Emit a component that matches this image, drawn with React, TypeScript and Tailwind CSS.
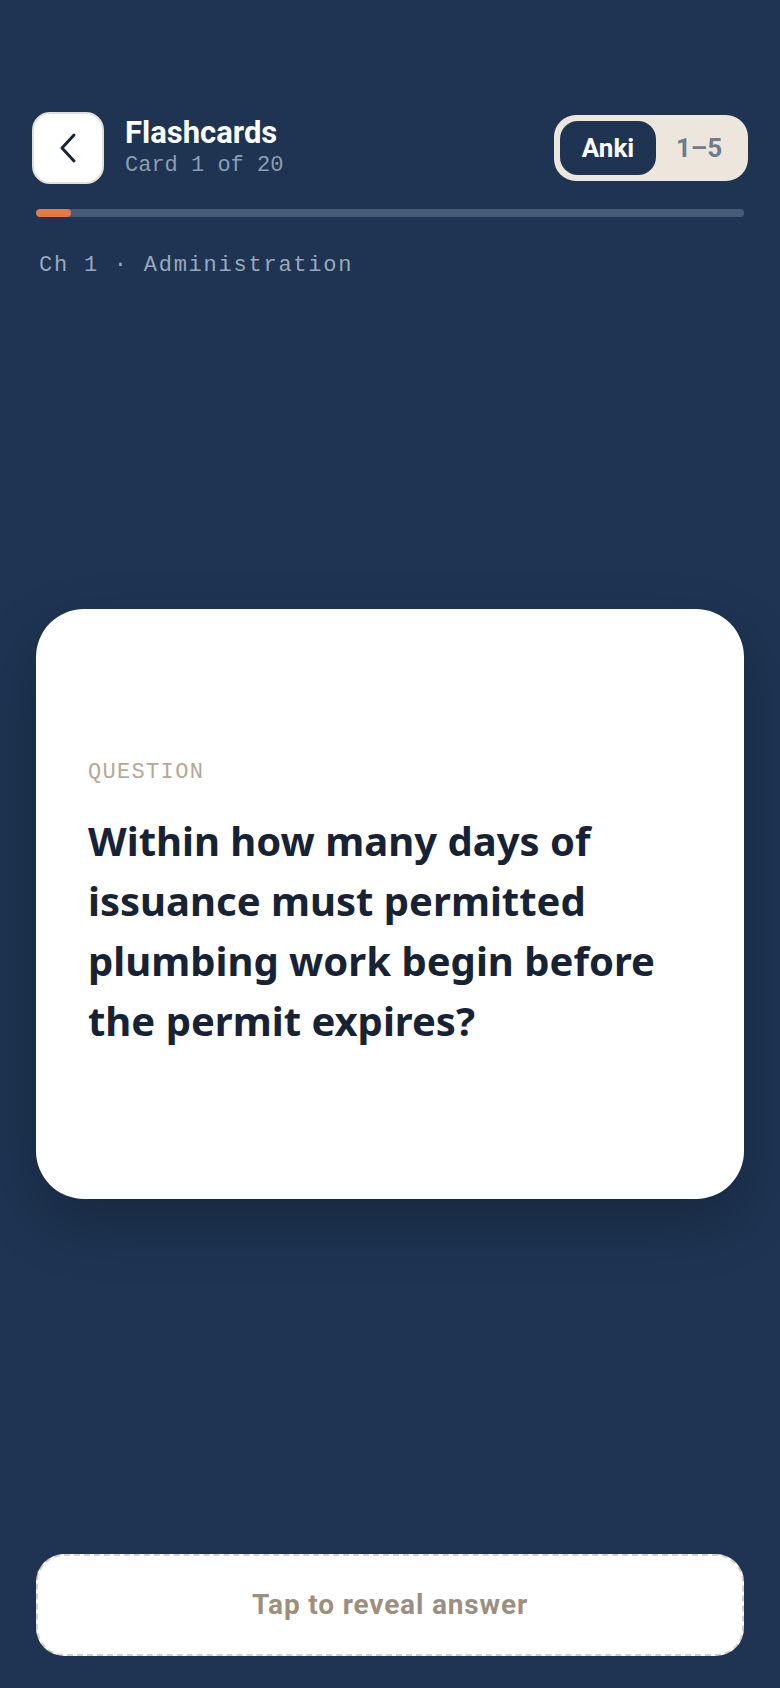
import React from 'react';

const sans = "font-['Roboto','Noto_Sans',sans-serif]";
const mono = "font-['Liberation_Mono','DejaVu_Sans_Mono',monospace]";

function BackButton() {
  return (
    <button className="w-[72px] h-[72px] shrink-0 rounded-[18px] bg-white border-2 border-[#e6dfd3] flex items-center justify-center">
      <svg width="22" height="32" viewBox="0 0 22 32" fill="none">
        <path d="M17 3 L5 16 L17 29" stroke="#1a2638" strokeWidth="3" strokeLinecap="round" strokeLinejoin="round" />
      </svg>
    </button>
  );
}

function ModeToggle() {
  return (
    <div className="flex items-center p-[6px] h-[66px] rounded-[22px] bg-[#ede6dc]">
      <div className="w-[96px] h-[54px] rounded-[18px] bg-[#1e3452] text-white font-bold text-[26px] flex items-center justify-center">
        Anki
      </div>
      <div className="w-[86px] h-[54px] text-[#6e7c8e] font-bold text-[26px] flex items-center justify-center">
        1–5
      </div>
    </div>
  );
}

export default function App() {
  const current = 1;
  const total = 20;

  return (
    <div className={`h-[1688px] bg-[#1e3452] flex flex-col px-9 pt-[112px] pb-8 ${sans}`}>
      {/* Header */}
      <header className="flex items-center justify-between -mx-1">
        <div className="flex items-center gap-[21px]">
          <BackButton />
          <div className="flex flex-col">
            <h1 className="text-white font-bold text-[31px] leading-[36px]">Flashcards</h1>
            <p className={`${mono} text-[22px] leading-[30px] text-[#8e9db3]`}>
              Card {current} of {total}
            </p>
          </div>
        </div>
        <ModeToggle />
      </header>

      {/* Progress */}
      <div className="mt-[25px] h-2 rounded-full bg-[#475b76] overflow-hidden">
        <div className="h-full rounded-full bg-[#e8784a]" style={{ width: `${(current / total) * 100}%` }} />
      </div>

      <p className={`${mono} mt-[32px] pl-[3px] text-[22px] leading-[33px] tracking-[0.08em] text-[#9aa8bc]`}>
        Ch 1 · Administration
      </p>

      {/* Card */}
      <main className="flex-1 flex items-center pb-[28px]">
        <div className="w-full h-[590px] rounded-[48px] bg-white px-[52px] flex flex-col justify-center shadow-[0_24px_60px_rgba(0,0,0,0.22)]">
          <p className={`${mono} text-[22px] leading-[32px] tracking-[0.06em] text-[#b5a898]`}>QUESTION</p>
          <h2 className="mt-[22px] font-['Noto_Sans',sans-serif] text-[40px] leading-[60px] font-bold text-[#172334]">
            Within how many days of issuance must permitted plumbing work begin before the permit expires?
          </h2>
        </div>
      </main>

      {/* Reveal */}
      <button className="h-[102px] w-full rounded-[28px] bg-white border-2 border-dashed border-[#d8d0c4] text-[28px] tracking-[0.03em] font-bold text-[#9c8f80]">
        Tap to reveal answer
      </button>
    </div>
  );
}
